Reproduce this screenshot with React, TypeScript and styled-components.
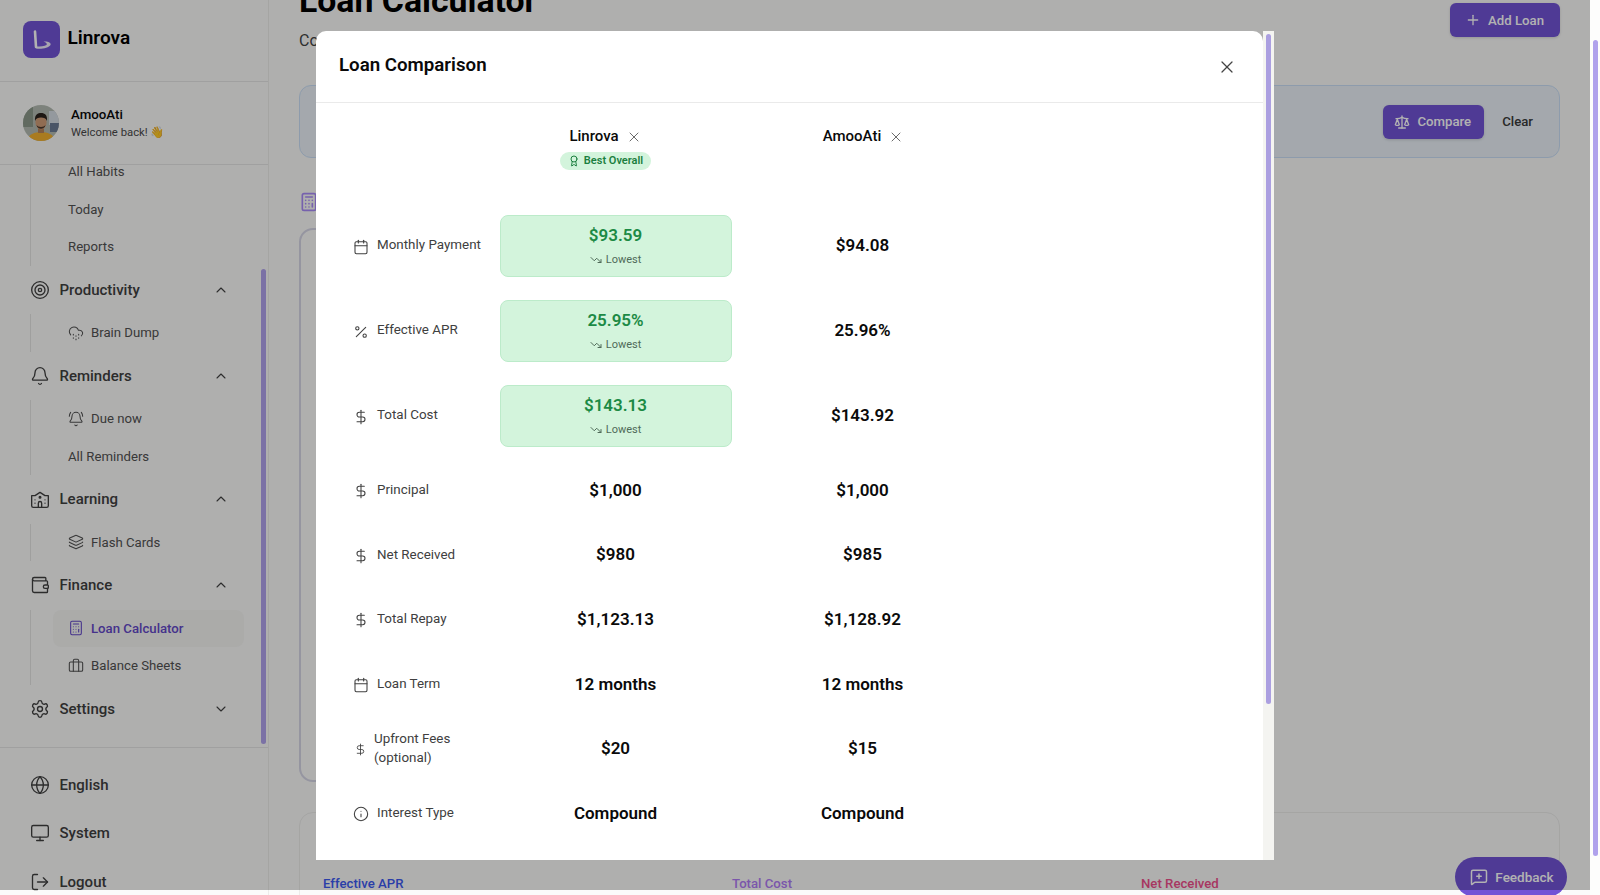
import React from "react";
import styled, { createGlobalStyle } from "styled-components";
import {
  Award,
  Bell,
  BellRing,
  Briefcase,
  Calculator,
  Calendar,
  ChevronDown,
  ChevronUp,
  CloudDrizzle,
  DollarSign,
  Globe,
  Info,
  Layers,
  LogOut,
  MessageSquarePlus,
  Monitor,
  Percent,
  Plus,
  Scale,
  Settings,
  Target,
  TrendingDown,
  Wallet,
  X,
} from "lucide-react";

const GlobalStyle = createGlobalStyle`
  html, body {
    margin: 0;
    height: 100%;
    overflow: hidden;
  }
  body {
    font-family: Roboto, "Liberation Sans", sans-serif;
    background: #fbfbfa;
    color: #111;
  }
  * {
    box-sizing: border-box;
  }
`;

const Root = styled.div`
  position: relative;
  display: flex;
  width: 1600px;
  height: 895px;
  overflow: hidden;
`;

const PageArea = styled.div`
  position: relative;
  flex: 1;
  display: flex;
  min-width: 0;
`;

const PageScrollTrack = styled.div`
  width: 10px;
  background: #fdfdfc;
  padding: 40px 2px 0 3px;
`;

const ScrollThumb = styled.div<{ $height: number; $color?: string }>`
  height: ${(p) => p.$height}px;
  border-radius: 4px;
  background: ${(p) => p.$color || "#b0a2ec"};
`;

/* sidebar */
const Sidebar = styled.aside`
  width: 269px;
  flex-shrink: 0;
  display: flex;
  flex-direction: column;
  border-right: 1px solid #ececea;
  background: #fbfbfa;
`;

const Brand = styled.div`
  height: 82px;
  flex-shrink: 0;
  display: flex;
  align-items: center;
  gap: 8px;
  padding: 0 0 3px 22.5px;
  border-bottom: 1px solid #e6e6e6;
`;

const BrandName = styled.span`
  margin-bottom: 3px;
  font-size: 19px;
  font-weight: 600;
  color: #000;
`;

const UserBox = styled.div`
  height: 83px;
  flex-shrink: 0;
  display: flex;
  align-items: center;
  gap: 12px;
  padding-left: 23px;
  border-bottom: 1px solid #e6e6e6;
`;

const UserName = styled.div`
  font-size: 13.3px;
  font-weight: 500;
  color: #0a0a0a;
  line-height: 18px;
`;

const UserNote = styled.div`
  font-size: 11.3px;
  color: #4a4a4a;
  line-height: 17px;
`;

const NavWrap = styled.div`
  flex: 1;
  min-height: 0;
  display: flex;
  overflow: hidden;
`;

const NavList = styled.nav`
  flex: 1;
  margin-top: -17.4px;
  padding-left: 29.5px;
`;

const NavThumbTrack = styled.div`
  width: 7px;
  padding: 104px 2px 0 0;
`;

const GroupHead = styled.div`
  height: 37.5px;
  display: flex;
  align-items: center;
  gap: 10px;
  font-size: 15px;
  font-weight: 500;
  color: #404040;
  padding-right: 32px;
  svg {
    flex-shrink: 0;
    color: #404040;
    stroke-width: 1.6;
  }
`;

const GroupName = styled.span`
  flex: 1;
`;

const SubList = styled.div`
  margin: 5.5px 0;
  border-left: 1px solid #e4e4e2;
  padding-left: 22px;
`;

const SubItem = styled.div<{ $active?: boolean }>`
  height: 37.5px;
  width: 191px;
  display: flex;
  align-items: center;
  gap: 7px;
  padding-left: 15.5px;
  border-radius: 8px;
  font-size: 13.2px;
  color: ${(p) => (p.$active ? "#6348c8" : "#525252")};
  font-weight: ${(p) => (p.$active ? 500 : 400)};
  background: ${(p) => (p.$active ? "#f5f5f3" : "transparent")};
  svg {
    flex-shrink: 0;
    stroke-width: 1.6;
  }
`;

const SideFooter = styled.div`
  height: 148px;
  flex-shrink: 0;
  border-top: 1px solid #e6e6e6;
  padding: 12.5px 0 0 29.5px;
`;

const FooterItem = styled.div`
  height: 48.5px;
  display: flex;
  align-items: center;
  gap: 10px;
  font-size: 15px;
  font-weight: 500;
  color: #404040;
  svg {
    stroke-width: 1.6;
  }
`;

/* main page behind the dialog */
const Main = styled.main`
  flex: 1;
  min-width: 0;
  padding: 0 30px 0 30px;
`;

const TitleRow = styled.div`
  display: flex;
  justify-content: space-between;
  align-items: flex-start;
  margin-top: -18px;
  height: 70px;
`;

const PageTitle = styled.h1`
  margin: -1px 0 1px;
  font-size: 33.8px;
  line-height: 40px;
  font-weight: 700;
  color: #000;
`;

const PageSub = styled.p`
  margin: 0;
  font-size: 16px;
  line-height: 38px;
  color: #444;
`;

const PrimaryButton = styled.button`
  height: 34px;
  display: inline-flex;
  align-items: center;
  gap: 7.5px;
  padding: 0 13px 0 11px;
  border: 0;
  border-radius: 6px;
  background: #7153d6;
  color: #fff;
  font-family: inherit;
  font-size: 13.2px;
  font-weight: 500;
  box-shadow: 0 1px 3px rgba(0, 0, 0, 0.15);
`;

const AddButton = styled(PrimaryButton)`
  margin-top: 21px;
  padding: 0 16px 0 15px;
`;

const ComparePanel = styled.div`
  height: 73px;
  margin-top: 33px;
  display: flex;
  align-items: center;
  justify-content: flex-end;
  padding-right: 14px;
  border: 1px solid #cbdff6;
  border-radius: 12px;
  background: #ebf1f8;
`;

const ClearButton = styled.button`
  height: 34px;
  margin-left: 6px;
  padding: 0 12px;
  border: 0;
  background: none;
  color: #3a3a3a;
  font-family: inherit;
  font-size: 13.2px;
  font-weight: 500;
`;

const SectionIcon = styled.div`
  height: 20px;
  margin-top: 33.5px;
  color: #a98bf8;
`;

const TableCard = styled.div`
  width: 900px;
  height: 554px;
  margin-top: 16.5px;
  border: 2px solid #d6d6e6;
  border-radius: 14px;
`;

const SummaryCard = styled.div`
  height: 120px;
  margin-top: 30px;
  display: grid;
  grid-template-columns: repeat(3, 409px);
  padding: 62px 0 0 23px;
  border: 1px solid #ececea;
  border-radius: 14px;
`;

const SummaryLabel = styled.span<{ $color: string }>`
  font-size: 13.2px;
  font-weight: 500;
  line-height: 18px;
  color: ${(p) => p.$color};
`;

const FeedbackButton = styled.button`
  position: absolute;
  right: 23px;
  bottom: -2px;
  width: 112px;
  height: 40px;
  display: flex;
  align-items: center;
  justify-content: center;
  gap: 7px;
  padding: 0 0 0 2px;
  border: 0;
  border-radius: 20px;
  background: #7153d6;
  color: #fff;
  font-family: inherit;
  font-size: 13.5px;
  font-weight: 500;
`;

/* dialog */
const Overlay = styled.div`
  position: absolute;
  left: 0;
  top: 0;
  width: 1590px;
  height: 890px;
  display: flex;
  align-items: center;
  justify-content: center;
  background: rgba(0, 0, 0, 0.3);
`;

const Dialog = styled.div`
  width: 958px;
  height: 829px;
  display: flex;
`;

const DialogMain = styled.div`
  flex: 1;
  min-width: 0;
  overflow: hidden;
  background: #fff;
  border-radius: 10px 10px 0 0;
`;

const DialogScrollTrack = styled.div`
  width: 11px;
  padding: 3px 3px 0 3px;
  background: #f4f4f1;
`;

const DialogHeader = styled.div`
  height: 72px;
  display: flex;
  align-items: center;
  justify-content: space-between;
  padding: 0 26px 0 23px;
  border-bottom: 1px solid #eaeaea;
  svg {
    margin-top: 2px;
  }
`;

const DialogTitle = styled.h2`
  margin: 0 0 2px;
  font-size: 18.7px;
  font-weight: 600;
  color: #0a0a0a;
`;

const CompareTable = styled.div`
  padding: 22px 0 0 23px;
`;

const TableRow = styled.div<{ $head?: boolean; $tall?: boolean }>`
  display: grid;
  grid-template-columns: 153px 247px 247px;
  height: ${(p) => (p.$head ? "78.5px" : p.$tall ? "85px" : "64.6px")};
  align-items: ${(p) => (p.$head ? "start" : "center")};
`;

const RowLabel = styled.div`
  display: flex;
  align-items: center;
  gap: 8px;
  padding-left: 14px;
  font-size: 13.4px;
  font-weight: 400;
  line-height: 18.5px;
  color: #404040;
  svg {
    flex-shrink: 0;
    margin-top: 2px;
    stroke-width: 1.6;
  }
`;

const FeeLabel = styled(RowLabel)`
  gap: 7px;
  padding-left: 15px;
`;

const HeadCell = styled.div<{ $shift: number }>`
  display: flex;
  flex-direction: column;
  align-items: center;
  gap: 5px;
  padding-right: ${(p) => (p.$shift > 0 ? p.$shift : 0)}px;
  padding-left: ${(p) => (p.$shift < 0 ? -p.$shift : 0)}px;
`;

const HeadName = styled.div`
  height: 22px;
  display: flex;
  align-items: center;
  gap: 7px;
  font-size: 15px;
  font-weight: 500;
  color: #0a0a0a;
  svg {
    margin-top: 2px;
    color: #6b6b6b;
  }
`;

const BestBadge = styled.div`
  height: 18px;
  display: flex;
  align-items: center;
  gap: 4px;
  padding: 0 8px;
  border-radius: 9px;
  background: #d3f4dc;
  color: #1c7f3f;
  font-size: 11px;
  font-weight: 600;
`;

const ValueCell = styled.div`
  margin-top: -1px;
  text-align: center;
  font-size: 17px;
  font-weight: 600;
  color: #0a0a0a;
`;

const BestCell = styled.div`
  height: 62px;
  margin: 0 7.5px;
  display: flex;
  flex-direction: column;
  align-items: center;
  justify-content: center;
  gap: 8px;
  border: 1px solid #bcebca;
  border-radius: 8px;
  background: #d3f4dc;
  font-size: 17px;
  font-weight: 600;
  color: #1c8a45;
`;

const BestNote = styled.div`
  display: flex;
  align-items: center;
  gap: 4px;
  font-size: 11px;
  line-height: 13px;
  font-weight: 400;
  color: #4f6a58;
`;

const LogoMark = () => (
  <svg width="37" height="37" viewBox="0 0 37 37" aria-label="Linrova logo">
    <rect width="37" height="37" rx="8" fill="#7153d6" />
    <path d="M12 10.5 L13 26" stroke="#fff" strokeWidth="2.6" strokeLinecap="round" fill="none" />
    <path
      d="M13 27.5 C18 28.5 26 27 27.5 24 C28.5 21.5 24.5 20 20.5 20.5 C23 21.5 24.5 22.5 23.5 24 C21.5 25.5 17 25.5 14 25.5"
      fill="#fff"
      opacity="0.9"
    />
  </svg>
);

const AvatarPic = () => (
  <svg width="36" height="36" viewBox="0 0 36 36" aria-label="AmooAti">
    <defs>
      <clipPath id="avatar-clip">
        <circle cx="18" cy="18" r="18" />
      </clipPath>
    </defs>
    <g clipPath="url(#avatar-clip)">
      <rect width="36" height="36" fill="#b4bbb2" />
      <rect x="0" y="0" width="10" height="22" fill="#8c988a" />
      <rect x="26" y="6" width="10" height="14" fill="#d5dbe2" />
      <rect x="27" y="18" width="9" height="9" fill="#6b7a94" />
      <path d="M4 36 C5 29 12 27 18 27 C24 27 31 29 32 36 Z" fill="#f2b12e" />
      <rect x="15" y="22" width="6" height="6" fill="#b5835c" />
      <ellipse cx="18" cy="17" rx="5.6" ry="7.5" fill="#cf9c78" />
      <path d="M12 16 C11.5 9 15 8 18 8 C22 8 24.5 10 24 16 C23 13 21 12.5 18 12.5 C15 12.5 13 13 12 16 Z" fill="#2a211c" />
      <path d="M13.5 20 C14.5 25 21.5 25 22.5 20 C21 22.5 15 22.5 13.5 20 Z" fill="#4a382c" />
    </g>
  </svg>
);

const SchoolIcon = () => (
  <svg
    width="20"
    height="20"
    viewBox="0 0 24 24"
    fill="none"
    stroke="currentColor"
    strokeWidth="2"
    strokeLinecap="round"
    strokeLinejoin="round"
  >
    <circle cx="12" cy="10" r="1" />
    <path d="M22 20V8h-4l-6-4-6 4H2v12a2 2 0 0 0 2 2h16a2 2 0 0 0 2-2" />
    <path d="M6 17v.01" />
    <path d="M6 13v.01" />
    <path d="M18 17v.01" />
    <path d="M18 13v.01" />
    <path d="M14 22v-5a2 2 0 0 0-2-2a2 2 0 0 0-2 2v5" />
  </svg>
);

type NavGroupProps = {
  icon: React.ReactNode;
  label: string;
  items?: { label: string; icon?: React.ReactNode; active?: boolean }[];
};

const NavGroup = ({ icon, label, items }: NavGroupProps) => (
  <>
    <GroupHead>
      {icon}
      <GroupName>{label}</GroupName>
      {items ? <ChevronUp size={16} /> : <ChevronDown size={16} />}
    </GroupHead>
    {items && (
      <SubList>
        {items.map((item) => (
          <SubItem key={item.label} $active={item.active}>
            {item.icon}
            {item.label}
          </SubItem>
        ))}
      </SubList>
    )}
  </>
);

const bestRows = [
  { icon: <Calendar size={16} />, label: "Monthly Payment", best: "$93.59", other: "$94.08" },
  { icon: <Percent size={16} />, label: "Effective APR", best: "25.95%", other: "25.96%" },
  { icon: <DollarSign size={16} />, label: "Total Cost", best: "$143.13", other: "$143.92" },
];

const plainRows = [
  { icon: <DollarSign size={16} />, label: "Principal", a: "$1,000", b: "$1,000" },
  { icon: <DollarSign size={16} />, label: "Net Received", a: "$980", b: "$985" },
  { icon: <DollarSign size={16} />, label: "Total Repay", a: "$1,123.13", b: "$1,128.92" },
  { icon: <Calendar size={16} />, label: "Loan Term", a: "12 months", b: "12 months" },
];

export default function App() {
  return (
    <Root>
      <GlobalStyle />
      <PageArea>
        <Sidebar>
          <Brand>
            <LogoMark />
            <BrandName>Linrova</BrandName>
          </Brand>
          <UserBox>
            <AvatarPic />
            <div>
              <UserName>AmooAti</UserName>
              <UserNote>Welcome back! 👋</UserNote>
            </div>
          </UserBox>
          <NavWrap>
            <NavList>
              <SubList>
                <SubItem>All Habits</SubItem>
                <SubItem>Today</SubItem>
                <SubItem>Reports</SubItem>
              </SubList>
              <NavGroup
                icon={<Target size={20} />}
                label="Productivity"
                items={[{ label: "Brain Dump", icon: <CloudDrizzle size={16} /> }]}
              />
              <NavGroup
                icon={<Bell size={20} />}
                label="Reminders"
                items={[
                  { label: "Due now", icon: <BellRing size={16} /> },
                  { label: "All Reminders" },
                ]}
              />
              <NavGroup
                icon={<SchoolIcon />}
                label="Learning"
                items={[{ label: "Flash Cards", icon: <Layers size={16} /> }]}
              />
              <NavGroup
                icon={<Wallet size={20} />}
                label="Finance"
                items={[
                  { label: "Loan Calculator", icon: <Calculator size={16} />, active: true },
                  { label: "Balance Sheets", icon: <Briefcase size={16} /> },
                ]}
              />
              <NavGroup icon={<Settings size={20} />} label="Settings" />
            </NavList>
            <NavThumbTrack>
              <ScrollThumb $height={475} />
            </NavThumbTrack>
          </NavWrap>
          <SideFooter>
            <FooterItem>
              <Globe size={20} />
              English
            </FooterItem>
            <FooterItem>
              <Monitor size={20} />
              System
            </FooterItem>
            <FooterItem>
              <LogOut size={20} />
              Logout
            </FooterItem>
          </SideFooter>
        </Sidebar>
        <Main>
          <TitleRow>
            <div>
              <PageTitle>Loan Calculator</PageTitle>
              <PageSub>Compare loan offers</PageSub>
            </div>
            <AddButton>
              <Plus size={16} />
              Add Loan
            </AddButton>
          </TitleRow>
          <ComparePanel>
            <PrimaryButton>
              <Scale size={16} />
              Compare
            </PrimaryButton>
            <ClearButton>Clear</ClearButton>
          </ComparePanel>
          <SectionIcon>
            <Calculator size={20} />
          </SectionIcon>
          <TableCard />
          <SummaryCard>
            <SummaryLabel $color="#3d5af1">Effective APR</SummaryLabel>
            <SummaryLabel $color="#b07cf5">Total Cost</SummaryLabel>
            <SummaryLabel $color="#f0508c">Net Received</SummaryLabel>
          </SummaryCard>
        </Main>
        <FeedbackButton>
          <MessageSquarePlus size={18} />
          Feedback
        </FeedbackButton>
      </PageArea>
      <PageScrollTrack>
        <ScrollThumb $height={816} />
      </PageScrollTrack>

      <Overlay>
        <Dialog>
          <DialogMain>
            <DialogHeader>
              <DialogTitle>Loan Comparison</DialogTitle>
              <X size={20} strokeWidth={1.5} color="#444" />
            </DialogHeader>
            <CompareTable>
              <TableRow $head>
                <div />
                <HeadCell $shift={20}>
                  <HeadName>
                    Linrova
                    <X size={16} strokeWidth={1.5} />
                  </HeadName>
                  <BestBadge>
                    <Award size={12} />
                    Best Overall
                  </BestBadge>
                </HeadCell>
                <HeadCell $shift={-2}>
                  <HeadName>
                    AmooAti
                    <X size={16} strokeWidth={1.5} />
                  </HeadName>
                </HeadCell>
              </TableRow>
              {bestRows.map((row) => (
                <TableRow $tall key={row.label}>
                  <RowLabel>
                    {row.icon}
                    {row.label}
                  </RowLabel>
                  <BestCell>
                    {row.best}
                    <BestNote>
                      <TrendingDown size={12} />
                      Lowest
                    </BestNote>
                  </BestCell>
                  <ValueCell>{row.other}</ValueCell>
                </TableRow>
              ))}
              {plainRows.map((row) => (
                <TableRow key={row.label}>
                  <RowLabel>
                    {row.icon}
                    {row.label}
                  </RowLabel>
                  <ValueCell>{row.a}</ValueCell>
                  <ValueCell>{row.b}</ValueCell>
                </TableRow>
              ))}
              <TableRow>
                <FeeLabel>
                  <DollarSign size={13} />
                  <span>
                    Upfront Fees
                    <br />
                    (optional)
                  </span>
                </FeeLabel>
                <ValueCell>$20</ValueCell>
                <ValueCell>$15</ValueCell>
              </TableRow>
              <TableRow>
                <RowLabel>
                  <Info size={16} />
                  Interest Type
                </RowLabel>
                <ValueCell>Compound</ValueCell>
                <ValueCell>Compound</ValueCell>
              </TableRow>
            </CompareTable>
          </DialogMain>
          <DialogScrollTrack>
            <ScrollThumb $height={670} $color="#ab9fe0" />
          </DialogScrollTrack>
        </Dialog>
      </Overlay>
    </Root>
  );
}
